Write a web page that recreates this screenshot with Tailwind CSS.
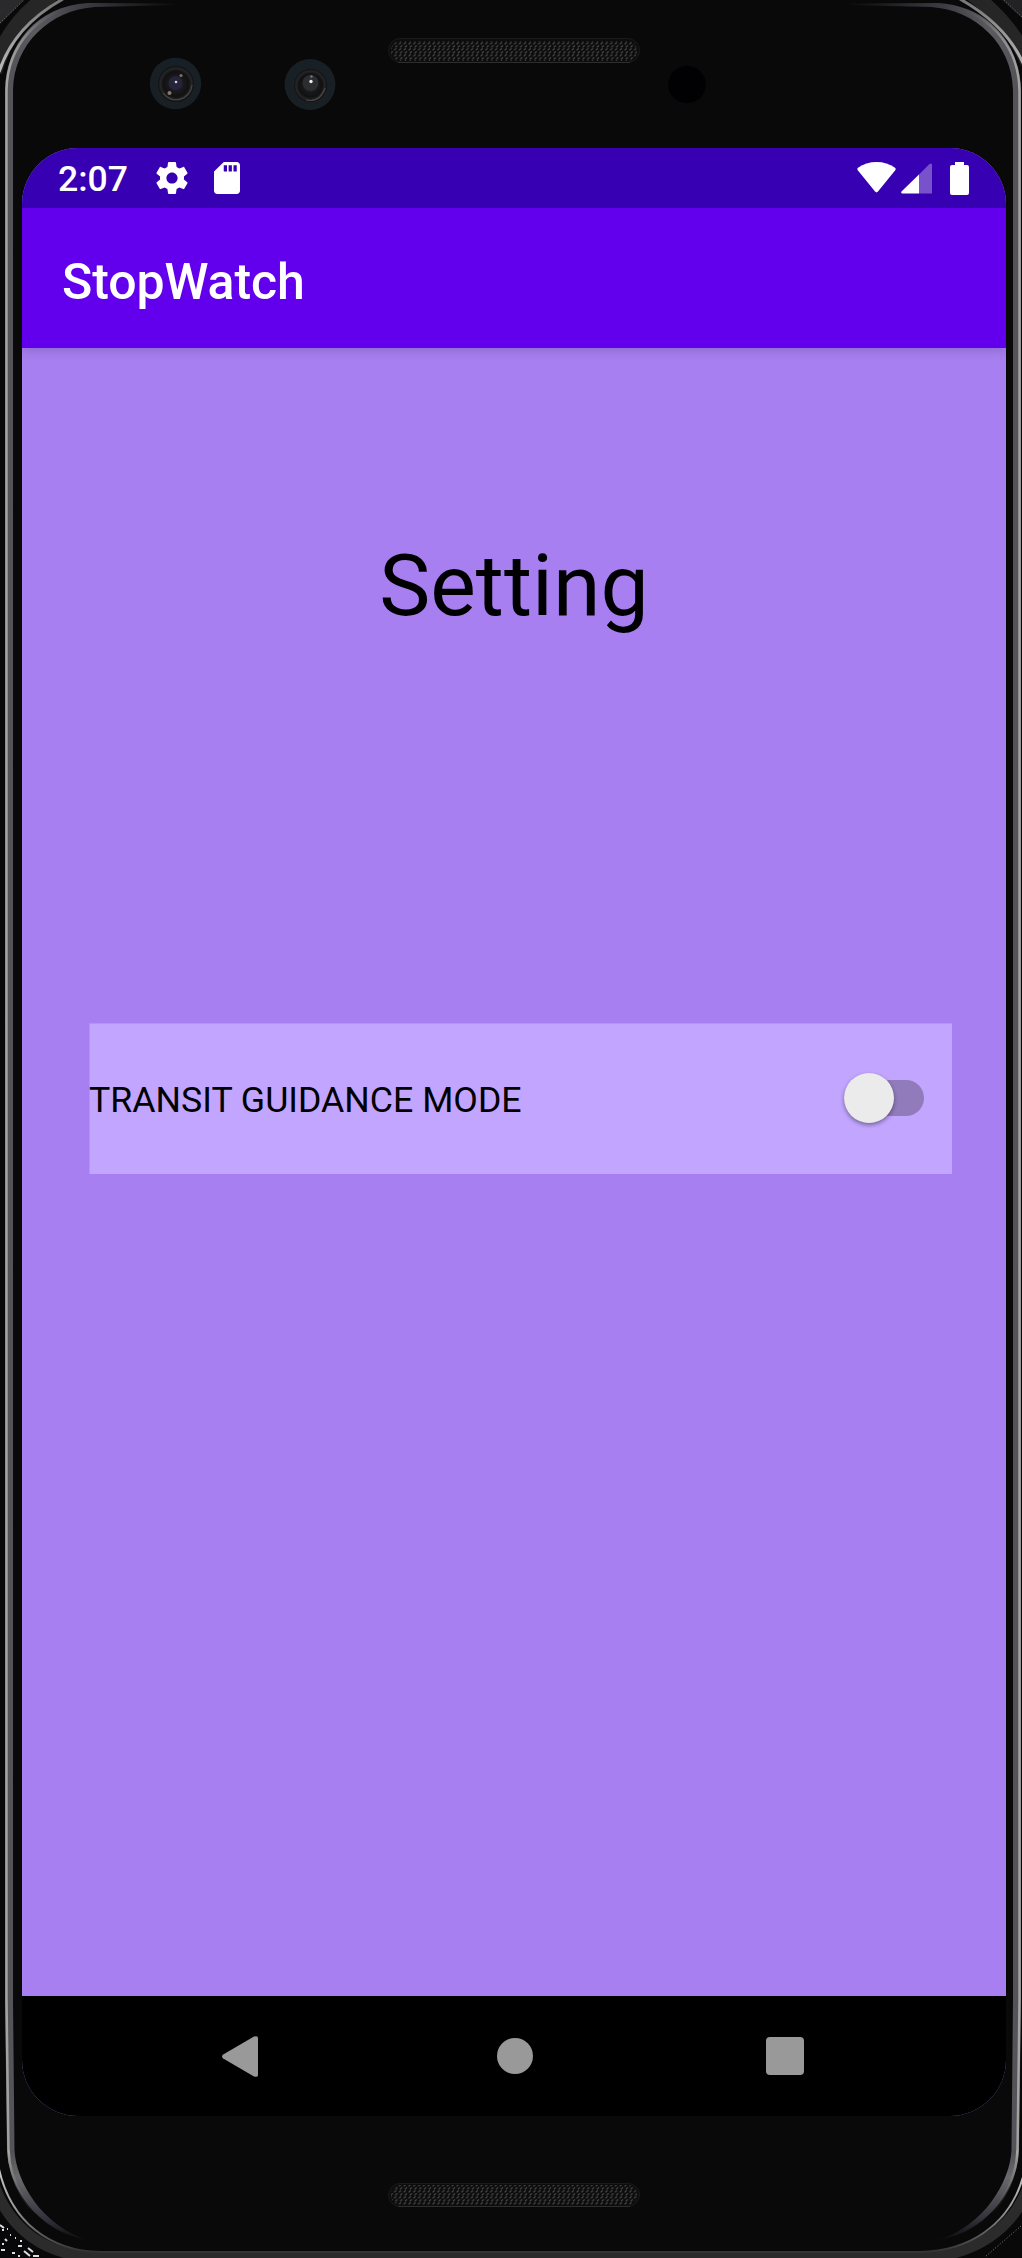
<!DOCTYPE html>
<html lang="en">
<head>
<meta charset="utf-8">
<title>StopWatch</title>
<script src="https://cdn.jsdelivr.net/npm/@tailwindcss/browser@4"></script>
</head>
<body class="bg-[#090909] font-['Roboto',sans-serif]">
<div class="relative w-[1022px] h-[2258px] overflow-hidden bg-[#090909] flex flex-col items-center">
  <!-- Device body -->
  <svg class="absolute inset-0" width="1022" height="2258" viewBox="0 0 1022 2258" fill="none">
    <defs>
      <linearGradient id="band" gradientUnits="userSpaceOnUse" x1="0" y1="0" x2="180" y2="0">
        <stop offset="0" stop-color="#505055"/><stop offset=".2" stop-color="#5a5a60"/><stop offset=".45" stop-color="#3e3d45"/><stop offset="1" stop-color="#090909"/>
      </linearGradient>
      <linearGradient id="shine" gradientUnits="userSpaceOnUse" x1="0" y1="0" x2="90" y2="0">
        <stop offset="0" stop-color="#adada9"/><stop offset=".25" stop-color="#8c8c8c"/><stop offset=".6" stop-color="#55555a" stop-opacity=".6"/><stop offset="1" stop-color="#333" stop-opacity="0"/>
      </linearGradient>
      <linearGradient id="bandB" gradientUnits="userSpaceOnUse" x1="0" y1="2150" x2="0" y2="2241">
        <stop offset="0" stop-color="#505055"/><stop offset=".3" stop-color="#6a6a6d"/><stop offset=".75" stop-color="#34333c"/><stop offset="1" stop-color="#0a0a0b"/>
      </linearGradient>
      <linearGradient id="shineB" gradientUnits="userSpaceOnUse" x1="0" y1="2150" x2="0" y2="2215">
        <stop offset="0" stop-color="#adada9"/><stop offset="1" stop-color="#555" stop-opacity="0"/>
      </linearGradient>
      <linearGradient id="outB" gradientUnits="userSpaceOnUse" x1="0" y1="2165" x2="0" y2="2252">
        <stop offset="0" stop-color="#ccc"/><stop offset=".5" stop-color="#999"/><stop offset="1" stop-color="#333"/>
      </linearGradient>
      <linearGradient id="outT" gradientUnits="userSpaceOnUse" x1="0" y1="70" x2="0" y2="0">
        <stop offset="0" stop-color="#bbb"/><stop offset="1" stop-color="#777"/>
      </linearGradient>
      <pattern id="mesh" width="4.8" height="6" patternUnits="userSpaceOnUse">
        <path d="M.6 2.400 2.600 .4" stroke="#4d4d4d" stroke-width="1.100"/><path d="M1.800 5.400 3.800 3.400" stroke="#4d4d4d" stroke-width="1.100"/>
      </pattern>
      <radialGradient id="lens" cx=".5" cy=".5" r=".5">
        <stop offset="0" stop-color="#34333f"/><stop offset=".35" stop-color="#1b1b20"/><stop offset=".7" stop-color="#111"/><stop offset=".88" stop-color="#262628"/><stop offset="1" stop-color="#0d0f11"/>
      </radialGradient>
    </defs>
    <rect width="1022" height="2258" fill="#090909"/>
    <!-- corners outside the body -->
    <path d="M0 0H24L0 24Z" fill="#2a2a2c"/><path d="M1022 0h-20l20 18Z" fill="#222224"/>
    <path d="M0 23 24 0M1022 17 1003 -1" stroke="#777" stroke-dasharray="1 2"/>
    <!-- outer rim -->
    <path d="M-6 72Q8 22 52-6" stroke="#262627" stroke-width="16"/>
    <path d="M-1 72Q14 26 63-1" stroke="url(#outT)" stroke-width="3"/>
    <path d="M1028 63Q1012 24 972-6" stroke="#262627" stroke-width="15"/>
    <path d="M1023 63Q1006 25 960-1" stroke="url(#outT)" stroke-width="3"/>
    <path d="M0 2219Q15 2244 38 2258H0Z" fill="#08080a"/>
    <path d="M-7 2182C8 2228 45 2257 100 2257H920C974 2257 1014 2228 1029 2185" stroke="#2b2b2b" stroke-width="11"/>
    <path d="M-1 2169C11 2222 50 2251 100 2252H920C968 2251 1009 2226 1023 2177" stroke="url(#outB)" stroke-width="2"/>
    <path d="M2 2230h2M7 2229h1M5 2239l2 2M18 2246h4M1 2250h4M12 2253h3M24 2251l6 5M28 2248l5 4M33 2256h6M0 2225l4 3M10 2235h1M15 2238h1M2 2244h2M18 2256h2M20 2241h2" stroke="#ddd" stroke-width="2"/>
    <path d="M1021 2226 985 2257" stroke="#888" stroke-dasharray="1 2"/>
    <!-- inner rim -->
    <g id="rim">
      <path d="M180 3.500 88 3C36 6 6 45 5 90V2000L7 2150H14.500L13 2000V90C14 44 50 10 95 7L180 5Z" fill="url(#band)"/>
      <path d="M7 2150C8 2185 36 2232 88 2240 42 2226 16 2182 14.500 2150Z" fill="url(#bandB)"/>
      <path d="M89 5C38 8 7.500 46 6.500 90V2000L8.500 2150" stroke="url(#shine)" stroke-width="2.500"/>
      <path d="M8.500 2150C9.500 2184 30 2214 50 2226" stroke="url(#shineB)" stroke-width="2.500"/>
    </g>
    <use href="#rim" transform="translate(1026 0) scale(-1 1)"/>
    <!-- cameras and sensor -->
    <circle cx="175.500" cy="83.500" r="25.700" fill="#192025"/><circle cx="176" cy="84" r="18" fill="url(#lens)"/>
    <circle cx="175.500" cy="83" r="7" fill="#25243a"/><circle cx="176" cy="82" r="1.300" fill="#d4d4e2"/><circle cx="181" cy="75.500" r="1.600" fill="#77716e"/><circle cx="169.500" cy="93" r="2" fill="#857972"/>
    <path d="M163 93a16 16 0 0 0 29-8" stroke="#4b4643" stroke-width="1.200"/>
    <circle cx="310" cy="84.500" r="25.400" fill="#192025"/><circle cx="310.500" cy="85.500" r="16.500" fill="url(#lens)"/>
    <circle cx="310.500" cy="83" r="8" fill="#2c2d31"/><circle cx="311" cy="81.500" r="1.700" fill="#eee"/><circle cx="311.500" cy="76.500" r="1.200" fill="#7b7583"/>
    <path d="M306 100q14 3 19-12" stroke="#4b4643" stroke-width="1.200"/>
    <circle cx="687" cy="84.500" r="18.700" fill="#010103"/>
    <!-- speakers -->
    <g stroke-width="1">
      <rect x="388.500" y="38.500" width="251" height="24" rx="12" fill="#0d0d0d" stroke="#1b1b1b"/><rect x="391" y="41" width="246" height="20" rx="9" fill="url(#mesh)"/><path d="M398 62.500H630" stroke="#2e2e2e"/>
      <rect x="388.500" y="2183.500" width="251" height="23" rx="11.500" fill="#0d0d0d" stroke="#1b1b1b"/><rect x="391" y="2185" width="246" height="20" rx="9" fill="url(#mesh)"/><path d="M398 2206.500H630" stroke="#2e2e2e"/>
    </g>
  </svg>

  <!-- Screen -->
  <main class="relative mt-[148px] ml-[6px] w-[984px] h-[1968px] shrink-0 rounded-[56px] overflow-hidden bg-[#a77ff0] flex flex-col">
    <div class="relative z-10 h-[60px] shrink-0 bg-[#3700b3] flex items-center pl-[36px] pr-[37px]">
      <span class="w-[98px] text-white text-[35.5px] leading-none font-medium mt-[4px]">2:07</span>
      <svg class="w-[32px] h-[32px]" viewBox="2 2 20 20" fill="#fff"><path d="M19.430 12.980c.04-.32.07-.64.07-.98s-.03-.66-.07-.98l2.110-1.650c.19-.15.24-.42.12-.64l-2-3.460c-.12-.22-.39-.3-.61-.22l-2.490 1c-.52-.4-1.080-.73-1.690-.98l-.38-2.650C14.460 2.180 14.250 2 14 2h-4c-.25 0-.46.18-.49.42l-.38 2.650c-.61.25-1.170.59-1.690.98l-2.490-1c-.23-.09-.49 0-.61.22l-2 3.460c-.13.22-.07.49.12.64l2.110 1.650c-.04.32-.07.65-.07.98s.03.66.07.98l-2.110 1.650c-.19.15-.24.42-.12.64l2 3.460c.12.22.39.3.61.22l2.490-1c.52.4 1.080.73 1.690.98l.38 2.650c.03.24.24.42.49.42h4c.25 0 .46-.18.49-.42l.38-2.650c.61-.25 1.170-.59 1.690-.98l2.490 1c.23.09.49 0 .61-.22l2-3.460c.12-.22.07-.49-.12-.64l-2.110-1.650zM12 15.500c-1.930 0-3.500-1.570-3.500-3.500s1.570-3.500 3.500-3.500 3.500 1.570 3.500 3.500-1.570 3.500-3.500 3.500z"/></svg>
      <svg class="w-[26px] h-[32px] ml-[26px]" viewBox="4 2 16 20" preserveAspectRatio="none" fill="#fff"><path d="M18 2h-8L4.020 8 4 20c0 1.100.9 2 2 2h12c1.100 0 2-.9 2-2V4c0-1.100-.9-2-2-2zm-6 6h-2V4h2v4zm3 0h-2V4h2v4zm3 0h-2V4h2v4z"/></svg>
      <svg class="ml-auto w-[39px] h-[31px] -mt-[2px]" viewBox="0 0 39 31" fill="#fff"><path d="M.8 8.200Q-.3 6.700 1 5.700 9 0 19.500 0T38 5.700q1.300 1 .2 2.500L21 29.600q-1.500 1.600-3 0Z"/></svg>
      <svg class="ml-[5px] w-[31px] h-[32px] mt-[1px]" viewBox="0 0 31 32"><path d="M18 11.500 28.500 1Q31-.5 31 2v28.500H18Z" fill="#fff" fill-opacity=".32"/><path d="M.5 28.500 18 11.500v19H1.500Q-.5 30.500.5 28.500Z" fill="#fff"/></svg>
      <svg class="ml-[18px] w-[19px] h-[33px]" viewBox="0 0 19 33" fill="#fff"><path d="M5 0h9v3h3q2 0 2 2v26q0 2-2 2H2q-2 0-2-2V5q0-2 2-2h3Z"/></svg>
    </div>
    <header class="relative h-[140px] shrink-0 bg-[#6200ee] flex items-center pl-[40px] shadow-[0_2px_10px_rgba(0,0,0,0.18)]">
      <h1 class="text-white text-[50px] leading-none font-medium mt-[7px] tracking-[-0.1px]">StopWatch</h1>
    </header>
    <section class="grow flex flex-col items-center">
      <h2 class="text-black text-[86px] leading-[100px] mt-[188px]">Setting</h2>
      <div class="mt-[387px] ml-[13px] w-[863px] h-[151px] bg-[#c2a5ff] border-t border-l border-[#b492f7] flex items-center justify-between pr-[28px]">
        <span class="text-black text-[35.700px] leading-none mt-[4px] -ml-px">TRANSIT GUIDANCE MODE</span>
        <div class="w-[80px] h-[36px] -mt-[2px] rounded-full bg-[#917bbb] flex items-center">
          <div class="w-[50px] h-[50px] shrink-0 rounded-full bg-[#ebebeb] shadow-[0_2px_4px_rgba(0,0,0,0.4)]"></div>
        </div>
      </div>
    </section>
    <nav class="h-[120px] shrink-0 bg-black flex items-center">
      <svg class="ml-[200px] w-[36px] h-[41px]" viewBox="0 0 36 41" fill="#999"><path d="M1.200 18.500 32 .6Q36-.8 36 2V39q0 2.800-4 1.400L1.200 22.500q-2.400-2 0-4Z"/></svg>
      <div class="ml-[238.500px] w-[36px] h-[36px] rounded-full bg-[#999]"></div>
      <div class="ml-[233.500px] w-[38px] h-[38px] rounded-[4px] bg-[#999]"></div>
    </nav>
  </main>
</div>
</body>
</html>
